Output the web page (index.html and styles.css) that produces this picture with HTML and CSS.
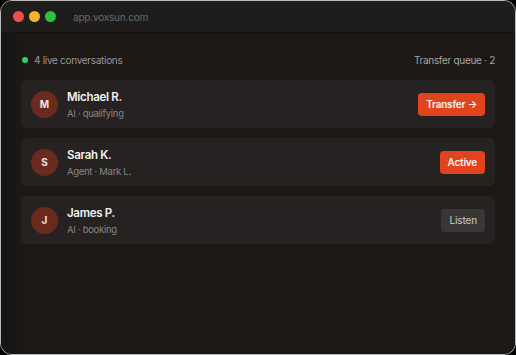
FILE: index.html
```html
<!DOCTYPE html>
<html>
<head>
<meta charset="utf-8">
<link rel="stylesheet" href="styles.css">
</head>
<body>
<div class="window">
  <div class="titlebar">
    <div class="lights">
      <span class="light red"></span>
      <span class="light yellow"></span>
      <span class="light green"></span>
    </div>
    <span class="url">app.voxsun.com</span>
  </div>
  <div class="content">
    <div class="header">
      <div class="live"><span class="dot"></span>4 live conversations</div>
      <div class="queue">Transfer queue · 2</div>
    </div>
    <div class="list">
      <div class="card">
        <div class="avatar">M</div>
        <div class="info">
          <div class="name">Michael R.</div>
          <div class="sub">AI · qualifying</div>
        </div>
        <button class="btn primary">Transfer →</button>
      </div>
      <div class="card">
        <div class="avatar">S</div>
        <div class="info">
          <div class="name">Sarah K.</div>
          <div class="sub">Agent · Mark L.</div>
        </div>
        <button class="btn primary">Active</button>
      </div>
      <div class="card">
        <div class="avatar">J</div>
        <div class="info">
          <div class="name">James P.</div>
          <div class="sub">AI · booking</div>
        </div>
        <button class="btn ghost">Listen</button>
      </div>
    </div>
  </div>
</div>
</body>
</html>
```

FILE: styles.css
```css
* { box-sizing: border-box; }
html, body { margin: 0; padding: 0; background: #000; }
body {
  width: 516px;
  height: 355px;
  font-family: Inter, "Noto Sans", sans-serif;
  letter-spacing: -0.3px;
}
.window {
  width: 516px;
  height: 355px;
  border: 1px solid #b9b9b9;
  border-radius: 12px;
  overflow: hidden;
  background: #1c1816;
  display: flex;
  flex-direction: column;
}
.titlebar {
  height: 32px;
  flex: none;
  background: #1f1d1c;
  display: flex;
  align-items: center;
  padding-left: 12px;
  border-bottom: 1px solid #141211;
}
.lights { display: flex; gap: 5px; }
.light { width: 11px; height: 11px; border-radius: 50%; display: block; }
.red { background: #ee4f4b; }
.yellow { background: #f3b62a; }
.green { background: #29c23f; }
.url {
  margin-left: 17px;
  font-size: 10px;
  color: #6b6866;
  letter-spacing: -0.2px;
}
.content {
  flex: 1;
  padding: 19px 20px 0 20px;
  background: linear-gradient(to right, #141414 0, #181615 14px, #1c1816 16px);
}
.header {
  display: flex;
  justify-content: space-between;
  align-items: center;
  height: 16px;
  font-size: 10px;
  color: #9a9694;
}
.live { display: flex; align-items: center; }
.dot {
  width: 6px; height: 6px; border-radius: 50%;
  background: #2fcf6a;
  margin: 0 6px 0 1px;
}
.queue { color: #a9a5a3; }
.list {
  margin-top: 12px;
  display: flex;
  flex-direction: column;
  gap: 10px;
}
.card {
  height: 48px;
  background: #262221;
  border-radius: 6px;
  display: flex;
  align-items: center;
  padding: 0 10px 0 10px;
}
.avatar {
  width: 27px; height: 27px;
  border-radius: 50%;
  background: #6a2b1e;
  color: #f0e6e2;
  font-size: 10px;
  font-weight: 700;
  display: flex; align-items: center; justify-content: center;
  flex: none;
  letter-spacing: 0;
}
.info { flex: 1; margin-left: 9px; padding-top: 2px; }
.name { font-size: 11.5px; font-weight: 600; color: #f3f1f0; line-height: 15px; }
.sub { font-size: 9.5px; color: #8a8583; margin-top: 3px; line-height: 12px; }
.btn {
  border: none;
  font-family: inherit;
  letter-spacing: -0.2px;
  height: 23px;
  border-radius: 4px;
  padding: 0 8px;
  font-size: 10px;
  font-weight: 600;
}
.primary { background: #e1431d; color: #fff4ef; }
.ghost { background: #393635; color: #bcb8b6; font-weight: 500; }
```
